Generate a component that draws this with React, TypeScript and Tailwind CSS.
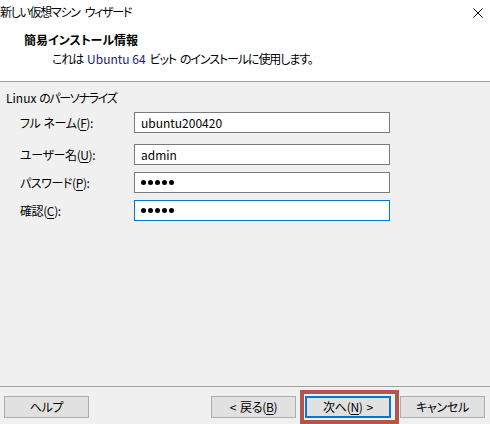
import React from "react";

const font = "[font-family:'Noto_Sans_CJK_JP','Noto_Sans',sans-serif] [font-feature-settings:'palt']";

function U({ c }: { c: string }) {
  return <span className="underline underline-offset-[2px]">{c}</span>;
}

function Dots() {
  return (
    <div className="flex gap-[2px] items-center">
      {[0, 1, 2, 3, 4].map((i) => (
        <span key={i} className="w-[5px] h-[5px] rounded-full bg-black" />
      ))}
    </div>
  );
}

function Row({
  label,
  children,
  focused,
  mt,
}: {
  label: React.ReactNode;
  children: React.ReactNode;
  focused?: boolean;
  mt: string;
}) {
  return (
    <div className={`flex items-center ${mt}`}>
      <div className="w-[128px] pl-[14px] text-[12px] leading-[14px] tracking-[-0.4px]">{label}</div>
      <div
        className={`w-[256px] h-[21px] bg-white flex items-center pl-[6px] text-[12px] leading-[14px] ${
          focused ? "border border-[#0078d7]" : "border border-[#7a7a7a]"
        }`}
      >
        {children}
      </div>
    </div>
  );
}

function Btn({ children, className = "" }: { children: React.ReactNode; className?: string }) {
  return (
    <div
      className={`w-[85px] h-[22px] bg-[#e1e1e1] border border-[#adadad] flex items-center justify-center text-[12px] leading-[14px] tracking-[-0.3px] ${className}`}
    >
      {children}
    </div>
  );
}

export default function App() {
  return (
    <div className={`w-[490px] h-[424px] bg-[#f0f0f0] flex flex-col overflow-hidden text-black ${font}`}>
      <div className="bg-white h-[82px] border-b border-[#a0a0a0] flex flex-col shrink-0">
        <div className="h-[24px] flex items-center justify-between pr-[7px]">
          <span className="text-[12px] leading-[14px] tracking-[-1.3px]">
            新しい仮想マシン<span className="ml-[5px]">ウィザード</span>
          </span>
          <svg width="10" height="10" viewBox="0 0 10 10" className="mt-[2px]">
            <path d="M0.5 0.5L9.5 9.5M9.5 0.5L0.5 9.5" stroke="#000" strokeWidth="1" />
          </svg>
        </div>
        <div className="pl-[24px] mt-[9px] font-bold text-[12px] leading-[14px]">簡易インストール情報</div>
        <div className="pl-[52px] mt-[5px] text-[12px] leading-[14px]">
          <span className="tracking-[-1.1px] mr-[4px]">これは</span>
          <span className="text-[#1c1c70]">Ubuntu 64</span>
          <span className="tracking-[-1.1px] ml-[4px]">ビット</span>
          <span className="tracking-[-1.1px] ml-[4px]">のインストールに使用します。</span>
        </div>
      </div>

      <div className="flex-1 flex flex-col px-[6px] pt-[9px]">
        <div className="text-[12px] leading-[14px]">
          Linux <span className="tracking-[-1.3px]">のパーソナライズ</span>
        </div>
        <Row mt="mt-[7px]" label={<>フル<span className="ml-[3px]">ネーム(<U c="F" />):</span></>}>
          ubuntu200420
        </Row>
        <Row mt="mt-[11px]" label={<>ユーザー名(<U c="U" />):</>}>
          admin
        </Row>
        <Row mt="mt-[7px]" label={<>パスワード(<U c="P" />):</>}>
          <Dots />
        </Row>
        <Row mt="mt-[7px]" focused label={<>確認(<U c="C" />):</>}>
          <Dots />
        </Row>
      </div>

      <div className="h-[38px] border-t border-[#a0a0a0] flex items-start shrink-0">
        <Btn className="ml-[4px] mt-[9px]">ヘルプ</Btn>
        <div className="flex-1" />
        <Btn className="mt-[9px]">
          &lt;<span className="ml-[4px]">戻る(<U c="B" />)</span>
        </Btn>
        <div className="ml-[4px] mt-[3px] h-[34px] border-4 border-[#b5534f] pt-[2px] pl-[1px] pr-[4px]">
          <div className="w-[86px] h-[22px] bg-[#e1e1e1] border-2 border-[#0078d7] flex items-center justify-center text-[12px] leading-[14px] tracking-[-0.3px]">
            次へ(<U c="N" />)<span className="ml-[4px]">&gt;</span>
          </div>
        </div>
        <Btn className="ml-[1px] mr-[5px] mt-[9px]">キャンセル</Btn>
      </div>
    </div>
  );
}
